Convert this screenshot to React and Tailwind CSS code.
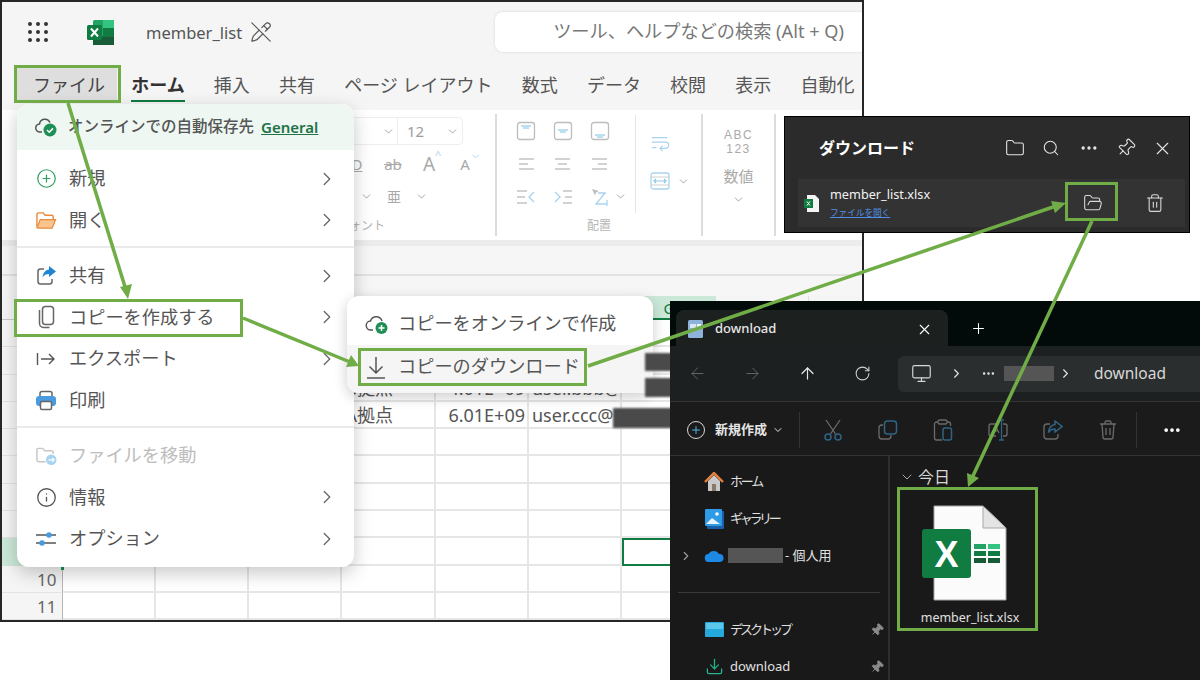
import React from "react";
import {
  ArrowLeft, ArrowRight, ArrowUp, ChevronDown, ChevronRight, CirclePlus, Download, Ellipsis, Folder, FolderOpen, Info, Monitor, PencilOff, Pin, Plus, RotateCw, Search, Trash2, X,
} from "lucide-react";

const COLS = ["A", "B", "C", "D", "E", "F", "G", "H", "I"];
const ROWS = [1, 2, 3, 4, 5, 6, 7, 8, 9, 10, 11];
const CELLS = {
  "3-D": "B拠点",
  "3-E": "4.01E+09",
  "3-F": "user.bbb@",
  "4-D": "A拠点",
  "4-E": "6.01E+09",
  "4-F": "user.ccc@",
};
const TABS = ["挿入", "共有", "ページ レイアウト", "数式", "データ", "校閲", "表示", "自動化"];

function ExcelLogo() {
  return (
    <svg width="27" height="25" viewBox="0 0 27 25">
      <rect x="6" y="0" width="21" height="25" rx="1.5" fill="#21a366" />
      <rect x="16" y="0" width="11" height="8" fill="#33c481" />
      <rect x="16" y="8" width="11" height="8.5" fill="#107c41" />
      <rect x="6" y="16.5" width="21" height="8.5" fill="#185c37" />
      <rect x="0" y="5" width="15" height="15" rx="1.5" fill="#107c41" />
      <path d="M4 8.5l7 8M11 8.5l-7 8" stroke="#fff" strokeWidth="2" />
    </svg>
  );
}

function AppGrid() {
  return (
    <div className="grid w-[20px] grid-cols-3 gap-[4px]">
      {Array.from({ length: 9 }, (_, i) => (
        <span key={i} className="h-[4px] w-[4px] rounded-full bg-[#333]" />
      ))}
    </div>
  );
}

function AlignBox({ pos }) {
  const y = pos === "top" ? 5 : pos === "mid" ? 9 : 14;
  return (
    <svg width="20" height="20" viewBox="0 0 20 20" fill="none">
      <rect x="1.5" y="1.5" width="17" height="17" rx="2.5" stroke="#bdbdbd" strokeWidth="1.3" />
      <path d={`M5 ${y}h10M7 ${y + 2}h6`} stroke="#a9d4ee" strokeWidth="1.3" />
    </svg>
  );
}

function Lines({ kind }) {
  const d =
    kind === "left"
      ? "M2 4h15M2 9h9M2 14h15"
      : kind === "center"
      ? "M2 4h15M5 9h9M2 14h15"
      : "M2 4h15M8 9h9M2 14h15";
  return (
    <svg width="19" height="18" viewBox="0 0 19 18" fill="none">
      <path d={d} stroke="#c4c4c4" strokeWidth="1.3" />
    </svg>
  );
}

function Indent({ dir }) {
  return (
    <svg width="20" height="18" viewBox="0 0 20 18" fill="none">
      {dir === "out" ? (
        <>
          <path d="M1 3h10M1 9h8M1 15h10" stroke="#c4c4c4" strokeWidth="1.3" />
          <path d="M18 4l-5 5 5 5" stroke="#a9d4ee" strokeWidth="1.4" />
        </>
      ) : (
        <>
          <path d="M10 3h9M12 9h7M10 15h9" stroke="#c4c4c4" strokeWidth="1.3" />
          <path d="M2 4l5 5-5 5" stroke="#a9d4ee" strokeWidth="1.4" />
        </>
      )}
    </svg>
  );
}

function Orientation() {
  return (
    <svg width="20" height="20" viewBox="0 0 20 20" fill="none">
      <path d="M2 2l7 2-3 1.5-1 3z" fill="#bdbdbd" />
      <path d="M8 6l8 0M15 6l-9 11h11M17 13v6" stroke="#a9d4ee" strokeWidth="1.3" />
    </svg>
  );
}

function RibbonChevron() {
  return <ChevronDown size={13} strokeWidth={1.6} className="text-[#9a9a9a]" />;
}

function FontGroup() {
  return (
    <div className="flex h-full w-[495px] flex-col items-end border-r-2 border-[#dcdcdc] pt-px">
      <div className="flex h-[33px] items-center pr-[32px]">
        <div className="flex h-[28px] w-[112px] items-center rounded-[4px] border border-[#eeeeee]">
          <div className="flex h-full w-[46px] items-center justify-end border-r border-[#eeeeee] pr-[2px]">
            <RibbonChevron />
          </div>
          <span className="ml-[9px] text-[15px] text-[#9c9c9c]">12</span>
          <ChevronDown size={13} strokeWidth={1.6} className="ml-[22px] text-[#9a9a9a]" />
        </div>
      </div>
      <div className="flex h-[33px] items-center pr-[12px] text-[#a9a9a9]">
        <span className="w-[36px] text-center text-[15px] underline">D</span>
        <span className="w-[36px] text-center text-[15px] line-through">ab</span>
        <span className="relative w-[36px] text-center text-[19px]">
          A<span className="absolute left-[24px] top-[-3px] text-[11px] text-[#a9d4ee]">^</span>
        </span>
        <span className="relative w-[36px] text-center text-[15px]">
          A<ChevronDown size={11} className="absolute left-[23px] top-[-2px] text-[#a9d4ee]" />
        </span>
      </div>
      <div className="flex h-[33px] items-center pr-[67px] text-[#a9a9a9]">
        <span className="mr-[13px]"><RibbonChevron /></span>
        <span className="text-[14px] leading-[14px] [writing-mode:vertical-rl]">亜</span>
        <span className="ml-[15px]"><RibbonChevron /></span>
      </div>
      <div className="mt-[3px] pr-[110px] text-[12px] leading-[20px] text-[#b5b5b5]">フォント</div>
    </div>
  );
}

function AlignGroup() {
  return (
    <div className="flex h-full w-[206px] flex-col border-r-2 border-[#dcdcdc] pt-px">
      <div className="flex h-[99px] pl-[11px]">
        <div className="grid w-[110px] grid-cols-3 grid-rows-3">
          <span className="flex items-center justify-center"><AlignBox pos="top" /></span>
          <span className="flex items-center justify-center"><AlignBox pos="mid" /></span>
          <span className="flex items-center justify-center"><AlignBox pos="bot" /></span>
          <span className="flex items-center justify-center"><Lines kind="left" /></span>
          <span className="flex items-center justify-center"><Lines kind="center" /></span>
          <span className="flex items-center justify-center"><Lines kind="right" /></span>
          <span className="flex items-center justify-center"><Indent dir="out" /></span>
          <span className="flex items-center justify-center"><Indent dir="in" /></span>
          <span className="flex items-center justify-center"><Orientation /></span>
        </div>
        <div className="-ml-[4px] flex w-[21px] items-end pb-[10px]"><RibbonChevron /></div>
        <div className="flex w-[66px] flex-col items-start gap-[19px] border-l border-[#e4e4e4] pl-[14px] pt-[19px]">
          <svg width="20" height="18" viewBox="0 0 22 18" fill="none">
            <path d="M2 3h17M2 8h15a3 3 0 0 1 0 7h-5M14 12l-3 3 3 3M2 14h5" stroke="#a9d4ee" strokeWidth="1.3" />
          </svg>
          <div className="flex items-center gap-[7px]">
            <svg width="20" height="20" viewBox="0 0 20 20" fill="none">
              <rect x="1" y="2" width="18" height="16" rx="2" stroke="#a9d4ee" strokeWidth="1.3" />
              <path d="M1 6h18M1 14h18" stroke="#d0d0d0" strokeWidth="1" />
              <path d="M4 10h12M6 8l-2 2 2 2M14 8l2 2-2 2" stroke="#8fc5e8" strokeWidth="1.1" />
            </svg>
            <RibbonChevron />
          </div>
        </div>
      </div>
      <div className="mt-[3px] text-center text-[12px] leading-[20px] text-[#b5b5b5]">配置</div>
    </div>
  );
}

function NumberGroup() {
  return (
    <div className="flex h-full w-[73px] flex-col items-center border-r-2 border-[#dcdcdc] pt-[14px] text-[#a9a9a9]">
      <div className="text-center font-['Liberation_Sans',sans-serif] text-[12px] leading-[14px] tracking-[1.5px]">
        ABC
        <br />
        123
      </div>
      <div className="mt-[9px] text-[15px] leading-[22px]">数値</div>
      <div className="mt-[6px]"><RibbonChevron /></div>
    </div>
  );
}

function SheetGrid() {
  return (
    <div className="flex-1 overflow-hidden">
      <div className="grid grid-cols-[60.5px_repeat(9,93.3px)] grid-rows-[24px_repeat(11,27.3px)]">
        <div className="border-b border-r border-[#c8c8c8] bg-[#f5f5f5]" />
        {COLS.map((c) => (
          <div
            key={c}
            className={
              c === "G"
                ? "border-b-2 border-[#107c41] bg-[#cbe8d8] text-center text-[15px] leading-[24px] text-[#107c41]"
                : "border-b border-r border-[#dedede] bg-[#f5f5f5]"
            }
          >
            {c === "G" ? c : null}
          </div>
        ))}
        {ROWS.map((r) => (
          <React.Fragment key={r}>
            <div
              className={
                r === 9
                  ? "border-r border-[#9c9c9c] bg-[#cbe8d8]"
                  : "border-b border-r border-[#e2e2e2] border-r-[#b5b5b5] bg-[#f5f5f5] pr-[5px] text-right text-[17px] leading-[27px] text-[#666]"
              }
            >
              {r >= 10 ? r : null}
            </div>
            {COLS.map((c) => (
              <div
                key={c}
                className={
                  r === 9 && c === "G"
                    ? "border-2 border-[#107c41] bg-white"
                    : c === "E"
                    ? "whitespace-nowrap border-b-2 border-r-2 border-[#e6e6e6] bg-white pr-[2px] text-right text-[18px] leading-[27px] text-[#555]"
                    : "whitespace-nowrap border-b-2 border-r-2 border-[#e6e6e6] bg-white pl-[3px] text-[18px] leading-[27px] text-[#555]"
                }
              >
                {CELLS[`${r}-${c}`]}
              </div>
            ))}
          </React.Fragment>
        ))}
      </div>
    </div>
  );
}

function MenuRow({ icon, label, chevron = true, muted = false }) {
  return (
    <div className="flex h-[41.5px] items-center pl-[18px]">
      <span className="flex w-[22px] justify-center">{icon}</span>
      <span className={`ml-[12px] text-[18.2px] ${muted ? "text-[#bdbdbd]" : "text-[#555]"}`}>{label}</span>
      {chevron && <ChevronRight size={22} strokeWidth={1.4} className="ml-auto mr-[16px] text-[#666]" />}
    </div>
  );
}

function FileMenu() {
  return (
    <div className="absolute left-[15px] top-[102px] w-[337px] overflow-hidden rounded-xl bg-white shadow-[0_6px_18px_rgba(0,0,0,0.22)]">
      <div className="flex h-[46px] items-center bg-[#eef7f2] pl-[18px]">
        <span className="relative flex w-[22px]">
          <svg width="22" height="20" viewBox="0 0 22 20" fill="none">
            <path d="M7 15H5a4 4 0 0 1-.5-8A5.5 5.5 0 0 1 15 5.5" stroke="#555" strokeWidth="1.5" />
            <circle cx="15" cy="13" r="6.5" fill="#1e8f55" />
            <path d="M12 13l2.2 2.2L18 11.4" stroke="#fff" strokeWidth="1.5" />
          </svg>
        </span>
        <span className="ml-[11px] text-[15.5px] font-medium text-[#555]">オンラインでの自動保存先</span>
        <span className="ml-[7px] text-[15px] font-semibold text-[#217346] underline">General</span>
      </div>
      <div className="border-b-2 border-[#eaeaea] pb-[5px] pt-[8px]">
        <MenuRow label="新規" icon={<CirclePlus size={21} strokeWidth={1.4} className="text-[#2f9e63]" />} />
        <MenuRow
          label="開く"
          icon={
            <svg width="23" height="19" viewBox="0 0 23 19" fill="none">
              <path d="M2 16V3a1.5 1.5 0 0 1 1.5-1.5h5l2 2.5h7A1.5 1.5 0 0 1 19 5.500V8" stroke="#e98a3c" strokeWidth="1.5" />
              <path d="M2 17l3.500-8.500h16L18 17.500H3z" fill="#f9c48e" stroke="#e98a3c" strokeWidth="1.300" />
            </svg>
          }
        />
      </div>
      <div className="border-b-2 border-[#eaeaea] pb-[5px] pt-[7px]">
        <MenuRow
          label="共有"
          icon={
            <svg width="21" height="21" viewBox="0 0 21 21" fill="none">
              <path d="M8 4H4.500A2.500 2.500 0 0 0 2 6.500v10A2.500 2.500 0 0 0 4.500 19h9a2.500 2.500 0 0 0 2.500-2.500V14" stroke="#666" strokeWidth="1.500" />
              <path d="M13 1l7 5.500-7 5.500V9c-3 0-5 1-6.500 3.500C7 8 9.500 5 13 4.500z" fill="#1e86d0" />
            </svg>
          }
        />
        <MenuRow
          label="コピーを作成する"
          icon={
            <svg width="20" height="24" viewBox="0 0 20 24" fill="none">
              <rect x="6.500" y="1.500" width="11" height="18" rx="3" stroke="#666" strokeWidth="1.500" />
              <path d="M3.500 5v13.500a4 4 0 0 0 4 4h6" stroke="#666" strokeWidth="1.500" />
            </svg>
          }
        />
        <MenuRow
          label="エクスポート"
          icon={
            <svg width="20" height="18" viewBox="0 0 20 18" fill="none">
              <path d="M1.500 3v12M5 9h13M13 4l5 5-5 5" stroke="#555" strokeWidth="1.400" />
            </svg>
          }
        />
        <MenuRow
          label="印刷"
          chevron={false}
          icon={
            <svg width="22" height="21" viewBox="0 0 22 21" fill="none">
              <path d="M5 6V3.500A2 2 0 0 1 7 1.500h8a2 2 0 0 1 2 2V6" stroke="#666" strokeWidth="1.500" />
              <rect x="1" y="6" width="20" height="10" rx="3" fill="#4a9be0" />
              <rect x="5.500" y="11.500" width="11" height="8" rx="1.500" fill="#fff" stroke="#666" strokeWidth="1.500" />
            </svg>
          }
        />
      </div>
      <div className="py-[7px]">
        <MenuRow
          label="ファイルを移動"
          chevron={false}
          muted
          icon={
            <svg width="23" height="20" viewBox="0 0 23 20" fill="none">
              <path d="M11 16H4a2 2 0 0 1-2-2V3.500A1.500 1.500 0 0 1 3.500 2h4.500l2 2.500h7a2 2 0 0 1 2 2V8" stroke="#c6c6c6" strokeWidth="1.500" />
              <circle cx="17" cy="14" r="5.500" fill="#a6d5f2" />
              <path d="M14 14h6M18 12l2 2-2 2" stroke="#fff" strokeWidth="1.200" />
            </svg>
          }
        />
        <MenuRow label="情報" icon={<Info size={21} strokeWidth={1.5} className="text-[#555]" />} />
        <MenuRow
          label="オプション"
          icon={
            <svg width="22" height="18" viewBox="0 0 22 18" fill="none">
              <path d="M1 5h20M1 13h20" stroke="#555" strokeWidth="1.400" />
              <circle cx="14" cy="5" r="2.800" fill="#4a9be0" />
              <circle cx="7" cy="13" r="2.800" fill="#4a9be0" />
            </svg>
          }
        />
      </div>
    </div>
  );
}

function SubMenu() {
  return (
    <div className="absolute left-[345px] top-[294px] w-[306px] overflow-hidden rounded-xl bg-white shadow-[0_4px_14px_rgba(0,0,0,0.2)]">
      <div className="flex h-[49px] items-center pl-[18px] pt-[7px]">
        <svg width="24" height="22" viewBox="0 0 24 22" fill="none">
          <path d="M8 17H6a4.500 4.500 0 0 1-.5-9A6 6 0 0 1 17 8" stroke="#555" strokeWidth="1.500" />
          <circle cx="16.500" cy="15" r="6" fill="#1e8f55" />
          <path d="M13.500 15h6M16.500 12v6" stroke="#fff" strokeWidth="1.500" />
        </svg>
        <span className="ml-[9px] text-[18.2px] text-[#555]">コピーをオンラインで作成</span>
      </div>
      <div className="flex h-[48px] items-center bg-[#f5f5f5] pb-[5px] pl-[16px]">
        <svg width="26" height="26" viewBox="0 0 26 26" fill="none">
          <path d="M13 3v16M6.500 12.500L13 19l6.500-6.500M4 24h18" stroke="#555" strokeWidth="1.500" />
        </svg>
        <span className="ml-[9px] text-[18.2px] text-[#555]">コピーのダウンロード</span>
      </div>
    </div>
  );
}

function ExcelWindow() {
  return (
    <div className="absolute left-0 top-0 flex h-[622px] w-[864px] flex-col overflow-hidden border-2 border-[#262626] bg-[#f5f5f5]">
      <div className="flex h-[60px] flex-none items-center">
        <span className="ml-[26px] flex-none"><AppGrid /></span>
        <span className="ml-[39px] flex-none"><ExcelLogo /></span>
        <span className="ml-[32px] flex-none pt-[2px] text-[16.5px] text-[#555]">member_list</span>
        <PencilOff size={22} strokeWidth={1.3} className="ml-[8px] flex-none text-[#555]" />
        <div className="ml-[223px] flex h-[40px] w-[400px] flex-none items-center rounded-l-lg bg-white pl-[58px] text-[18.2px] text-[#777] shadow-[0_0_3px_rgba(0,0,0,0.12)]">
          <span className="whitespace-nowrap">ツール、ヘルプなどの検索 (Alt + Q)</span>
        </div>
      </div>
      <div className="flex h-[48px] flex-none items-center gap-[29.2px] whitespace-nowrap pb-[2px] pl-[12px] text-[18px] text-[#555]">
        <span className="flex h-[36px] w-[103px] flex-none items-center justify-center bg-[#dedede] pl-[7px] text-[#444]">ファイル</span>
        <span className="relative -ml-[15px] font-bold text-[#333]">
          ホーム
          <span className="absolute bottom-[-3px] left-0 h-[2px] w-full bg-[#107c41]" />
        </span>
        {TABS.map((t) => (
          <span key={t}>{t}</span>
        ))}
      </div>
      <div className="flex h-[130px] flex-none items-stretch bg-white py-[4px]">
        <FontGroup />
        <AlignGroup />
        <NumberGroup />
      </div>
      <div className="h-[6px] flex-none bg-[#ececec]" />
      <div className="h-[30px] flex-none border-b-2 border-[#e2e2e2] bg-[#f6f6f6]" />
      <div className="h-[20px] flex-none bg-[#f6f6f6]" />
      <SheetGrid />
      <FileMenu />
      <SubMenu />
      <div className="absolute left-[643px] top-[351px] h-[18px] w-[40px] bg-[#4a4a4a] blur-[1px]" />
      <div className="absolute left-[643px] top-[376px] h-[19px] w-[40px] bg-[#4a4a4a] blur-[1px]" />
      <div className="absolute left-[611px] top-[406px] h-[20px] w-[70px] bg-[#4a4a4a] blur-[1px]" />
      <div className="absolute left-[59px] top-[565px] h-[3px] w-[3px] bg-[#107c41]" />
    </div>
  );
}

function DownloadPanel() {
  return (
    <div className="absolute left-[784px] top-[116px] h-[117px] w-[406px] border border-black bg-[#2b2b2b] text-white">
      <div className="flex h-[62px] items-center pl-[34px]">
        <span className="text-[16px] font-bold">ダウンロード</span>
        <div className="ml-auto flex items-center pr-[16px] text-[#e4e4e4]">
          <Folder size={20} strokeWidth={1.3} className="mr-[17px]" />
          <Search size={18} strokeWidth={1.4} className="mr-[19px]" />
          <Ellipsis size={20} strokeWidth={2} className="mr-[17px]" />
          <Pin size={20} strokeWidth={1.3} className="mr-[16px] rotate-45" />
          <X size={21} strokeWidth={1.3} />
        </div>
      </div>
      <div className="ml-[13px] flex h-[48px] w-[387px] items-center bg-[#333333] pl-[6px]">
        <svg width="15" height="17" viewBox="0 0 15 17" className="flex-none">
          <path d="M3 0h8l4 4v13H3z" fill="#f5f5f5" />
          <rect x="0" y="4" width="9" height="9" fill="#107c41" />
          <path d="M3 6.500l3 4M6 6.500l-3 4" stroke="#fff" strokeWidth="1" />
        </svg>
        <div className="ml-[11px] flex w-[124px] flex-none flex-col">
          <span className="text-[12.7px] leading-[20px] text-[#f2f2f2]">member_list.xlsx</span>
          <span className="text-[8.6px] leading-[18px] text-[#4f8fe6] underline">ファイルを開く</span>
        </div>
        <FolderOpen size={20} strokeWidth={1.3} className="ml-[129px] flex-none text-[#d8d8d8]" />
        <Trash2 size={20} strokeWidth={1.3} className="ml-[42px] flex-none text-[#d8d8d8]" />
      </div>
    </div>
  );
}

function NavButton({ children }) {
  return <span className="flex w-[55px] flex-none justify-center">{children}</span>;
}

function ToolButton({ children }) {
  return <span className="flex w-[55px] flex-none justify-center">{children}</span>;
}

const GRAY = "#6b6b6b";
const BLUE = "#2f6486";

function ToolIcons() {
  return (
    <>
      <ToolButton>
        <svg width="20" height="22" viewBox="0 0 20 22" fill="none">
          <path d="M3 1l9.500 14M17 1L7.500 15" stroke={GRAY} strokeWidth="1.300" />
          <circle cx="5" cy="18" r="3" stroke={BLUE} strokeWidth="1.500" />
          <circle cx="15" cy="18" r="3" stroke={BLUE} strokeWidth="1.500" />
        </svg>
      </ToolButton>
      <ToolButton>
        <svg width="20" height="20" viewBox="0 0 20 20" fill="none">
          <path d="M5 5H4a3 3 0 0 0-3 3v8a3 3 0 0 0 3 3h6a3 3 0 0 0 3-3v-1" stroke={GRAY} strokeWidth="1.300" />
          <rect x="6.500" y="1" width="12" height="13" rx="3" stroke={BLUE} strokeWidth="1.500" />
        </svg>
      </ToolButton>
      <ToolButton>
        <svg width="20" height="22" viewBox="0 0 20 22" fill="none">
          <path d="M5 3H3.500A2 2 0 0 0 1.500 5v14a2 2 0 0 0 2 2H9M14 3h1.500a2 2 0 0 1 2 2v2" stroke={GRAY} strokeWidth="1.300" />
          <rect x="5" y="1" width="9" height="4" rx="1.500" stroke={GRAY} strokeWidth="1.300" />
          <rect x="10" y="9" width="8.500" height="12" rx="2" stroke={BLUE} strokeWidth="1.500" />
        </svg>
      </ToolButton>
      <ToolButton>
        <svg width="20" height="22" viewBox="0 0 20 22" fill="none">
          <path d="M8 5H3a2 2 0 0 0-2 2v8a2 2 0 0 0 2 2h5M15 5h2a2 2 0 0 1 2 2v8a2 2 0 0 1-2 2h-2" stroke={GRAY} strokeWidth="1.300" />
          <path d="M4 14l3.500-7L11 14M5 12h5" stroke={GRAY} strokeWidth="1.200" />
          <path d="M11 1h2a1 1 0 0 1 .5 1v18a1 1 0 0 1-.5 1h-2M16 1h-2a1 1 0 0 0-.5 1M16 21h-2a1 1 0 0 1-.5-1" stroke={BLUE} strokeWidth="1.300" />
        </svg>
      </ToolButton>
      <ToolButton>
        <svg width="20" height="20" viewBox="0 0 20 20" fill="none">
          <path d="M7 4H4a3 3 0 0 0-3 3v9a3 3 0 0 0 3 3h8a3 3 0 0 0 3-3v-2" stroke={GRAY} strokeWidth="1.300" />
          <path d="M12 1l7 5.500-7 5.500V9c-3 0-5 1-6.500 3.500C6 8 8.500 5 12 4.500z" stroke={BLUE} strokeWidth="1.500" />
        </svg>
      </ToolButton>
      <ToolButton>
        <svg width="18" height="20" viewBox="0 0 18 20" fill="none">
          <path d="M1 4h16M6 4V2.500A1.500 1.500 0 0 1 7.500 1h3A1.500 1.500 0 0 1 12 2.500V4M3 4l1 13a2 2 0 0 0 2 2h6a2 2 0 0 0 2-2l1-13M7 8v7M11 8v7" stroke={GRAY} strokeWidth="1.300" />
        </svg>
      </ToolButton>
    </>
  );
}

function SideRow({ slot, icon, children, pin }) {
  return (
    <div className="flex h-[37px] items-center text-[13px] text-[#e0e0e0]">
      <span className="flex w-[32px] flex-none justify-center">{slot}</span>
      <span className="flex w-[24px] flex-none justify-center">{icon}</span>
      <span className="ml-[4px] flex items-center">{children}</span>
      {pin && <Pin size={14} strokeWidth={1.6} className="ml-auto mr-[4px] rotate-45 fill-[#8a8a8a] text-[#8a8a8a]" />}
    </div>
  );
}

function BigExcelIcon() {
  return (
    <svg width="86" height="97" viewBox="0 0 86 97">
      <path d="M12 1h49l23 22v72H12z" fill="#fbfbfb" stroke="#a6a6a6" strokeWidth="1" />
      <path d="M61 1v22h23z" fill="#e4e4e4" stroke="#a6a6a6" strokeWidth="1" />
      <rect x="0" y="24" width="49" height="49" rx="3" fill="#107c41" />
      <text x="24.500" y="62" textAnchor="middle" fontFamily="Liberation Sans, sans-serif" fontWeight="700" fontSize="36" fill="#fff">X</text>
      <rect x="52" y="39" width="12" height="5" fill="#21a366" />
      <rect x="66" y="39" width="12" height="5" fill="#33c481" />
      <rect x="52" y="46" width="12" height="5" fill="#107c41" />
      <rect x="66" y="46" width="12" height="5" fill="#107c41" />
      <rect x="52" y="53" width="12" height="5" fill="#185c37" />
      <rect x="66" y="53" width="12" height="5" fill="#185c37" />
    </svg>
  );
}

function Explorer() {
  return (
    <div className="absolute left-[670px] top-[301px] flex h-[379px] w-[530px] flex-col overflow-hidden bg-[#191919] text-[#e6e6e6]">
      <div className="flex h-[45px] flex-none items-end bg-[#020b0a] pl-[6px]">
        <div className="flex h-[36px] w-[272px] items-center rounded-t-lg bg-[#1c2120] pl-[12px] pt-[2px]">
          <svg width="15" height="18" viewBox="0 0 15 18">
            <rect width="15" height="18" rx="1.500" fill="#8fb2dc" />
            <rect x="2" y="4" width="6" height="4" fill="#dbe7f5" />
            <rect x="9" y="4" width="4" height="4" fill="#f4f8fc" />
          </svg>
          <span className="ml-[12px] text-[13px] font-medium">download</span>
          <X size={17} strokeWidth={1.500} className="ml-auto mr-[15px] text-white" />
        </div>
        <Plus size={17} strokeWidth={1.500} className="mb-[9px] ml-[22px] text-white" />
      </div>
      <div className="flex h-[56px] flex-none items-center border-b border-[#333] bg-[#1c2020]">
        <NavButton><ArrowLeft size={19} strokeWidth={1.200} className="text-[#666]" /></NavButton>
        <NavButton><ArrowRight size={19} strokeWidth={1.200} className="text-[#666]" /></NavButton>
        <NavButton><ArrowUp size={19} strokeWidth={1.500} className="text-[#e6e6e6]" /></NavButton>
        <NavButton><RotateCw size={17} strokeWidth={1.500} className="text-[#d0d0d0]" /></NavButton>
        <div className="ml-[8px] flex h-[36px] flex-1 items-center rounded-l-md bg-[#2a2e2e] pl-[13px]">
          <Monitor size={21} strokeWidth={1.300} className="text-[#d8d8d8]" />
          <ChevronRight size={15} strokeWidth={1.800} className="ml-[17px]" />
          <Ellipsis size={15} strokeWidth={2} className="ml-[17px]" />
          <span className="ml-[8px] h-[15px] w-[50px] bg-[#555] blur-[0.5px]" />
          <ChevronRight size={15} strokeWidth={1.800} className="ml-[4px]" />
          <span className="ml-[21px] text-[15.5px] text-[#d8d8d8]">download</span>
        </div>
      </div>
      <div className="flex h-[54px] flex-none items-center border-b border-[#333] bg-[#1b1b1b] pt-[3px]">
        <span className="ml-[17px] flex h-[18px] w-[18px] flex-none items-center justify-center rounded-full border border-[#d8d8d8]">
          <Plus size={12} strokeWidth={2} className="text-[#4fb3e8]" />
        </span>
        <span className="ml-[10px] text-[13px] font-semibold">新規作成</span>
        <ChevronDown size={12} className="ml-[5px]" />
        <span className="ml-[15px] mr-[5px] h-[36px] w-px bg-[#333]" />
        <ToolIcons />
        <span className="mx-[1px] h-[36px] w-px bg-[#333]" />
        <Ellipsis size={20} strokeWidth={2.500} className="ml-[24px] text-white" />
      </div>
      <div className="flex min-h-0 flex-1">
        <div className="w-[220px] flex-none border-r-2 border-[#2e2e2e] pt-[7px]">
          <SideRow
            icon={
              <svg width="20" height="19" viewBox="0 0 20 19">
                <path d="M4 9v10h12V9L10 3z" fill="#c9c9c9" />
                <rect x="8" y="12" width="4" height="7" fill="#8a7a6c" />
                <path d="M1 10l9-9 9 9" fill="none" stroke="#e8823a" strokeWidth="2.400" />
              </svg>
            }
          >
            <span className="tracking-[-2.2px]">ホーム</span>
          </SideRow>
          <SideRow
            icon={
              <svg width="19" height="20" viewBox="0 0 19 20">
                <rect x="2" y="2" width="17" height="18" rx="1" fill="#1a5fa8" />
                <rect width="17" height="17" rx="1" fill="#2e9be6" />
                <circle cx="12" cy="5" r="1.800" fill="#fff" />
                <path d="M1 15l6-6 8 6z" fill="#eaf4fb" />
              </svg>
            }
          >
            <span className="tracking-[-3.3px]">ギャラリー</span>
          </SideRow>
          <SideRow
            slot={<ChevronRight size={14} className="text-[#9a9a9a]" />}
            icon={
              <svg width="20" height="13" viewBox="0 0 20 13">
                <path d="M5 13a4 4 0 0 1-.5-8A6 6 0 0 1 15 5a4 4 0 0 1 1 8z" fill="#1e88e5" />
              </svg>
            }
          >
            <span className="-ml-[2px] mr-[2px] h-[15px] w-[55px] bg-[#555] blur-[0.5px]" />- 個人用
          </SideRow>
          <div className="mx-[8px] my-[18px] h-px w-[202px] bg-[#3a3a3a]" />
          <SideRow
            pin
            icon={
              <svg width="19" height="15" viewBox="0 0 19 15">
                <rect width="19" height="15" rx="1" fill="#25a9dc" />
                <rect x="1" y="1" width="17" height="6" fill="#5cc6ea" />
              </svg>
            }
          >
            <span className="tracking-[-3px]">デスクトップ</span>
          </SideRow>
          <SideRow pin icon={<Download size={19} strokeWidth={1.600} className="text-[#22b58e]" />}>
            download
          </SideRow>
        </div>
        <div className="flex-1 pt-[9px]">
          <div className="flex h-[24px] items-center pl-[9px]">
            <ChevronDown size={16} strokeWidth={1.300} className="text-[#bdbdbd]" />
            <span className="ml-[3px] text-[16px] text-[#d8d8d8]">今日</span>
          </div>
          <div className="ml-[7px] mt-[16px] flex w-[146px] flex-col items-start">
            <span className="ml-[25px]"><BigExcelIcon /></span>
            <span className="mt-[6px] w-full text-center text-[12.5px] leading-[20px] text-[#e0e0e0]">member_list.xlsx</span>
          </div>
        </div>
      </div>
    </div>
  );
}

function Annotations() {
  const boxes = [
    "left-[14px] top-[65px] h-[38px] w-[107px]",
    "left-[14px] top-[299px] h-[38px] w-[229px]",
    "left-[358px] top-[348px] h-[38px] w-[229px]",
    "left-[1065px] top-[182px] h-[39px] w-[53px]",
    "left-[897px] top-[487px] h-[144px] w-[141px]",
  ];
  const arrows = [
    "M68 103L126 290",
    "M243 318L350 362",
    "M588 366L1056 206",
    "M1092 221L972 478",
  ];
  const heads = [
    "128,299 120,287 132,284",
    "359,366 346,367 351,355",
    "1066,203 1055,213 1051,201",
    "968,487 967,473 979,478",
  ];
  return (
    <>
      <svg className="pointer-events-none absolute left-0 top-0" width="1200" height="680" viewBox="0 0 1200 680" fill="none">
        {arrows.map((d) => (
          <path key={d} d={d} stroke="#70ad47" strokeWidth="3.500" />
        ))}
        {heads.map((p) => (
          <polygon key={p} points={p} fill="#70ad47" />
        ))}
      </svg>
      {boxes.map((b) => (
        <div key={b} className={`pointer-events-none absolute border-[3px] border-[#70ad47] ${b}`} />
      ))}
    </>
  );
}

export default function App() {
  return (
    <div className="relative h-[680px] w-[1200px] overflow-hidden bg-white font-['Noto_Sans','Noto_Sans_CJK_JP',sans-serif]">
      <ExcelWindow />
      <DownloadPanel />
      <Explorer />
      <Annotations />
    </div>
  );
}
